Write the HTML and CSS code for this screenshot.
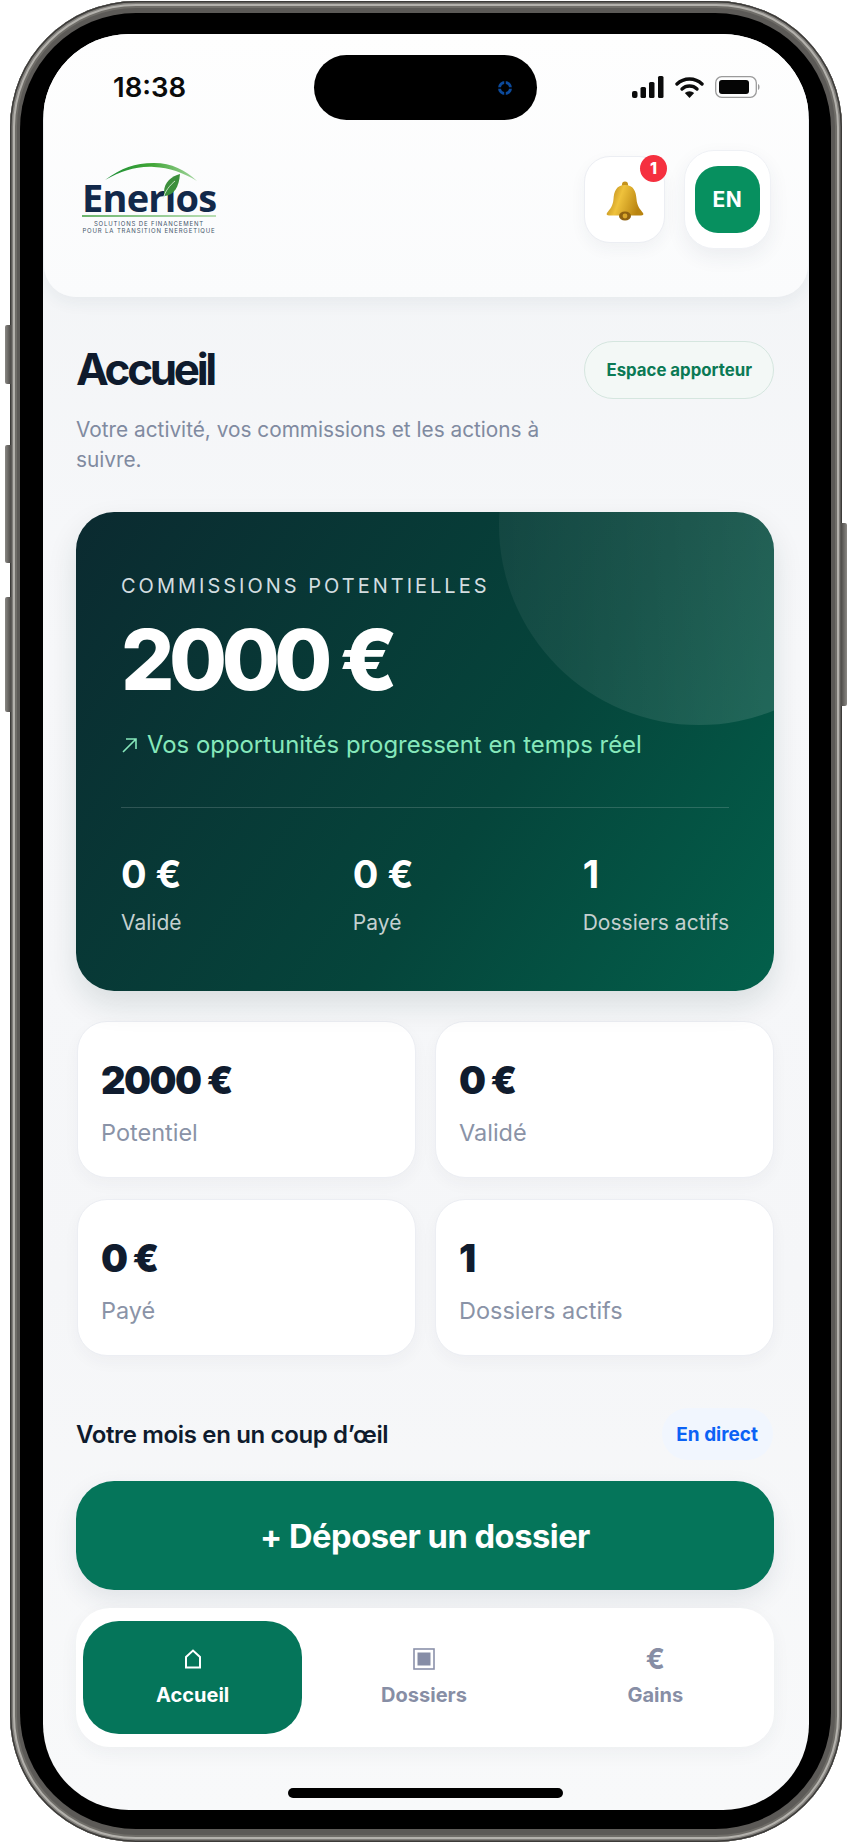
FILE: index.html
```html
<!DOCTYPE html>
<html>
<head>
    <title>Enerios - Accueil</title>
    <link rel="stylesheet" href="styles.css">
</head>
<body>
    <div class="phone">
        <span class="side-btn side-1"></span>
        <span class="side-btn side-2"></span>
        <span class="side-btn side-3"></span>
        <span class="side-btn side-4"></span>
        <div class="bezel">
            <div class="screen">
                <div class="island">
                    <svg class="camera" width="14" height="14" viewBox="0 0 14 14">
                        <circle cx="7" cy="7" r="5.5" fill="none" stroke="#0c4a9c" stroke-width="3"/>
                        <path d="M7 0 V14 M0 7 H14" stroke="#000" stroke-width="1.6"/>
                    </svg>
                </div>

                <header class="top-card">
                    <div class="status-bar">
                        <span class="time">18:38</span>
                        <div class="status-icons">
                            <svg width="32" height="22" viewBox="0 0 32 22">
                                <rect x="0" y="15" width="5.5" height="7" rx="2" fill="#0b0b0b"/>
                                <rect x="8.5" y="11" width="5.5" height="11" rx="1.5" fill="#0b0b0b"/>
                                <rect x="17" y="6" width="5.5" height="16" rx="1.5" fill="#0b0b0b"/>
                                <rect x="26" y="0" width="5.5" height="22" rx="1.5" fill="#0b0b0b"/>
                            </svg>
                            <svg width="29" height="22" viewBox="0 0 29 22">
                                <path d="M2 8 A18 18 0 0 1 27 8" fill="none" stroke="#0b0b0b" stroke-width="3.4" stroke-linecap="round"/>
                                <path d="M7 13 A11 11 0 0 1 22 13" fill="none" stroke="#0b0b0b" stroke-width="3.4" stroke-linecap="round"/>
                                <path d="M14.5 22 L9.8 17 A7 7 0 0 1 19.2 17 Z" fill="#0b0b0b"/>
                            </svg>
                            <svg width="46" height="22" viewBox="0 0 46 22">
                                <rect x="0.7" y="0.7" width="40.6" height="20.6" rx="6" fill="none" stroke="#9a9a9a" stroke-width="1.3"/>
                                <rect x="4" y="4" width="30" height="14" rx="3" fill="#050505"/>
                                <path d="M43 8 C45 8.6 45 13.4 43 14 Z" fill="#9a9a9a"/>
                            </svg>
                        </div>
                    </div>
                    <div class="brand-row">
                        <div class="logo">
                            <svg class="logo-mark" width="134" height="40" viewBox="0 0 134 40">
                                <defs>
                                    <linearGradient id="arcGrad" x1="0" x2="1" y1="0" y2="0">
                                        <stop offset="0" stop-color="#1f8f3a"/>
                                        <stop offset="0.5" stop-color="#3fa535"/>
                                        <stop offset="1" stop-color="#a5d6a0"/>
                                    </linearGradient>
                                </defs>
                                <path d="M23 19 C40 7 52 2 72 2 C90 2 103 9 115 20 C100 11 88 7 72 6 C54 5 40 10 23 19 Z" fill="url(#arcGrad)"/>
                                <path d="M98 13 C90 15 82 21 82 31 C82 33 82 34 83 35 C92 34 97 26 98 13 Z" fill="#3c8f3c"/>
                                <path d="M81 38 C83 30 88 24 93 20" fill="none" stroke="#eaf5e6" stroke-width="0.8"/>
                            </svg>
                            <div class="logo-name">Enerios</div>
                            <div class="logo-line"></div>
                            <div class="logo-tag">SOLUTIONS DE FINANCEMENT</div>
                            <div class="logo-tag">POUR LA TRANSITION ENERGETIQUE</div>
                        </div>
                        <div class="top-actions">
                            <div class="bell-btn">
                                <svg width="38" height="40" viewBox="0 0 38 40">
                                    <defs>
                                        <linearGradient id="bellGrad" x1="0" x2="1" y1="0" y2="0.3">
                                            <stop offset="0" stop-color="#a87410"/>
                                            <stop offset="0.45" stop-color="#efc23c"/>
                                            <stop offset="1" stop-color="#b98410"/>
                                        </linearGradient>
                                    </defs>
                                    <circle cx="19" cy="3.5" r="3" fill="#c4921c"/>
                                    <path d="M19 4 C10 4 8 11 7.5 18 C7 25 4 28 1 32 C0 33.5 1 34.5 3 34.5 L35 34.5 C37 34.5 38 33.5 37 32 C34 28 31 25 30.5 18 C30 11 28 4 19 4 Z" fill="url(#bellGrad)"/>
                                    <ellipse cx="19" cy="35" rx="6" ry="4.5" fill="#8f6210"/>
                                    <circle cx="19" cy="35" r="2.4" fill="#d9a72a"/>
                                </svg>
                                <span class="bell-badge">1</span>
                            </div>
                            <div class="lang-btn"><div class="lang-inner">EN</div></div>
                        </div>
                    </div>
                </header>

                <main class="content">
                    <div class="title-row">
                        <div>
                            <h1>Accueil</h1>
                            <p class="subtitle">Votre activité, vos commissions et les actions à suivre.</p>
                        </div>
                        <div class="role-pill">Espace apporteur</div>
                    </div>

                    <section class="hero">
                        <span class="hero-circle"></span>
                        <div class="hero-label">COMMISSIONS POTENTIELLES</div>
                        <div class="hero-amount">2000 €</div>
                        <div class="hero-trend">
                            <svg width="17" height="17" viewBox="0 0 17 17">
                                <path d="M2 15 L15 2 M5 2 L15 2 L15 12" fill="none" stroke="#86e8bb" stroke-width="1.6"/>
                            </svg>
                            Vos opportunités progressent en temps réel
                        </div>
                        <div class="hero-stats">
                            <div><div class="hero-value">0 €</div><div class="hero-name">Validé</div></div>
                            <div><div class="hero-value">0 €</div><div class="hero-name">Payé</div></div>
                            <div><div class="hero-value">1</div><div class="hero-name">Dossiers actifs</div></div>
                        </div>
                    </section>

                    <section class="stat-grid">
                        <div class="stat-card"><div class="stat-value">2000 €</div><div class="stat-name">Potentiel</div></div>
                        <div class="stat-card"><div class="stat-value">0 €</div><div class="stat-name">Validé</div></div>
                        <div class="stat-card"><div class="stat-value">0 €</div><div class="stat-name">Payé</div></div>
                        <div class="stat-card"><div class="stat-value">1</div><div class="stat-name">Dossiers actifs</div></div>
                    </section>

                    <div class="month-row">
                        <span class="month-title">Votre mois en un coup d’œil</span>
                        <span class="live-pill">En direct</span>
                    </div>

                    <button class="cta">+ Déposer un dossier</button>

                    <nav class="tabs">
                        <div class="tab active">
                            <svg width="18" height="20" viewBox="0 0 18 20">
                                <path d="M2 8 L9 1.5 L16 8 L16 18.5 L2 18.5 Z" fill="none" stroke="#fff" stroke-width="2"/>
                            </svg>
                            <span>Accueil</span>
                        </div>
                        <div class="tab">
                            <svg width="22" height="22" viewBox="0 0 22 22">
                                <rect x="1" y="1" width="20" height="20" fill="none" stroke="#8b91aa" stroke-width="1.6"/>
                                <rect x="4.5" y="4.5" width="13" height="13" fill="#868da6"/>
                            </svg>
                            <span>Dossiers</span>
                        </div>
                        <div class="tab">
                            <div class="tab-euro">€</div>
                            <span>Gains</span>
                        </div>
                    </nav>
                </main>

                <div class="home-bar"></div>
            </div>
        </div>
    </div>
</body>
</html>
```

FILE: styles.css
```css
* {
    box-sizing: border-box;
}
body {
    margin: 0;
    background-color: #fff;
    font-family: Inter, "Liberation Sans", sans-serif;
    color: #0f1b2d;
}
.phone {
    position: relative;
    width: 832px;
    height: 1841px;
    margin: 1px 0 0 10px;
    padding: 12px 11px 13px 10px;
    border-radius: 126px;
    background-color: #5c5a57;
    box-shadow: inset 0 0 0 1.5px #3c3b39, inset 0 0 0 3px #7f7d79, inset 0 0 0 5px #b3b1ac, inset 0 0 0 7px #6f6d68;
}
.side-btn {
    position: absolute;
    width: 6px;
    background: linear-gradient(90deg, #8a8884, #4d4b48);
    border-radius: 2px 0 0 2px;
}
.side-1 { left: -5px; top: 324px; height: 59px; }
.side-2 { left: -5px; top: 444px; height: 118px; }
.side-3 { left: -5px; top: 596px; height: 115px; }
.side-4 { left: auto; right: -5px; top: 522px; height: 183px; border-radius: 0 2px 2px 0; background: linear-gradient(90deg, #4d4b48, #8a8884); }
.bezel {
    height: 100%;
    padding: 21px 22px 19px 23px;
    border-radius: 116px;
    background-color: #000;
}
.screen {
    position: relative;
    display: flex;
    flex-direction: column;
    height: 100%;
    border-radius: 86px;
    overflow: hidden;
    background: linear-gradient(180deg, #f1f3f5 0, #f7f8fa 35%, #f5f6f8 70%, #f8f9fa 100%);
}
.island {
    position: absolute;
    left: 271px;
    top: 21px;
    width: 223px;
    height: 65px;
    border-radius: 33px;
    background-color: #000;
    z-index: 2;
}
.camera {
    position: absolute;
    left: 184px;
    top: 26px;
}
.top-card {
    height: 263px;
    margin: 0 1px;
    border-radius: 0 0 32px 32px;
    background: linear-gradient(180deg, #fefefe, #fafbfc);
    box-shadow: 0 6px 16px rgba(40, 60, 80, 0.06);
}
.status-bar {
    display: flex;
    justify-content: space-between;
    align-items: center;
    padding: 38px 47px 0 69px;
}
.time {
    font-size: 27.5px;
    font-weight: 600;
    line-height: 30px;
    color: #0b0b0b;
}
.status-icons {
    display: flex;
    align-items: center;
    gap: 11px;
}
.brand-row {
    display: flex;
    justify-content: space-between;
    align-items: flex-start;
    padding: 48px 37px 0 38px;
}
.logo {
    position: relative;
    width: 134px;
    padding-top: 31px;
}
.logo-mark {
    position: absolute;
    left: 0;
    top: 11px;
}
.logo-name {
    font-family: "Open Sans", sans-serif;
    font-size: 38px;
    font-weight: 700;
    line-height: 32px;
    letter-spacing: -0.8px;
    color: #12294a;
}
.logo-line {
    height: 2px;
    margin-top: 2px;
    background: linear-gradient(90deg, #6db56d, #b9deb3);
}
.logo-tag {
    margin-top: 3px;
    font-size: 6px;
    line-height: 7px;
    letter-spacing: 0.85px;
    text-align: center;
    white-space: nowrap;
    color: #44546a;
}
.logo-tag + .logo-tag {
    margin-top: 0;
}
.top-actions {
    display: flex;
    align-items: center;
    gap: 19px;
}
.bell-btn {
    position: relative;
    display: flex;
    justify-content: center;
    align-items: center;
    width: 81px;
    height: 87px;
    padding-top: 2px;
    border: 1px solid #eceef3;
    border-radius: 26px;
    background-color: #fff;
    box-shadow: 0 6px 16px rgba(40, 60, 80, 0.05);
}
.bell-badge {
    position: absolute;
    right: -3px;
    top: -2px;
    width: 27px;
    height: 27px;
    border-radius: 50%;
    background-color: #f5303f;
    color: #fff;
    font-size: 16px;
    font-weight: 800;
    line-height: 27px;
    text-align: center;
}
.lang-btn {
    display: flex;
    justify-content: center;
    align-items: center;
    width: 87px;
    height: 99px;
    border: 1px solid #eff1f5;
    border-radius: 30px;
    background-color: #fff;
    box-shadow: 0 8px 20px rgba(40, 60, 80, 0.07);
}
.lang-inner {
    width: 65px;
    height: 67px;
    border-radius: 23px;
    background-color: #07905f;
    color: #fff;
    font-size: 21px;
    font-weight: 700;
    line-height: 67px;
    letter-spacing: 0.5px;
    text-align: center;
}
.content {
    padding: 44px 35px 0 33px;
}
.title-row {
    display: flex;
    justify-content: space-between;
    align-items: flex-start;
}
h1 {
    margin: 2px 0 0;
    font-size: 44px;
    font-weight: 700;
    line-height: 52px;
    letter-spacing: -3.3px;
    color: #0f1b2d;
}
.subtitle {
    width: 480px;
    margin: 20px 0 0;
    font-size: 20.8px;
    line-height: 30px;
    color: #808aa0;
}
.role-pill {
    display: flex;
    align-items: center;
    height: 58px;
    padding: 0 21px;
    border: 1.5px solid #d5e6df;
    border-radius: 29px;
    background-color: #f3f8f6;
    color: #0b7a55;
    font-size: 16.8px;
    font-weight: 700;
}
.hero {
    position: relative;
    height: 479px;
    margin-top: 37px;
    padding: 61px 45px 0;
    border-radius: 38px;
    overflow: hidden;
    background: linear-gradient(125deg, #0b2a30 0%, #05453b 60%, #03604b 100%);
    box-shadow: 0 14px 30px rgba(20, 50, 50, 0.12);
    color: #fff;
}
.hero-circle {
    position: absolute;
    left: 423px;
    top: 13px;
    width: 400px;
    height: 400px;
    margin-top: -200px;
    border-radius: 50%;
    background: linear-gradient(90deg, rgba(255, 255, 255, 0.05), rgba(255, 255, 255, 0.15));
}
.hero-label {
    font-size: 20px;
    line-height: 26px;
    letter-spacing: 3px;
    color: #d3dde0;
}
.hero-amount {
    margin-top: 13px;
    font-size: 84px;
    font-weight: 800;
    line-height: 96px;
    letter-spacing: -5.5px;
}
.hero-trend {
    display: flex;
    align-items: center;
    gap: 9px;
    margin-top: 21px;
    font-size: 23.9px;
    line-height: 32px;
    color: #86e8bb;
}
.hero-stats {
    display: flex;
    justify-content: space-between;
    margin-top: 46px;
    padding-top: 42px;
    border-top: 1px solid rgba(255, 255, 255, 0.16);
}
.hero-value {
    font-size: 38px;
    font-weight: 700;
    line-height: 48px;
}
.hero-name {
    margin-top: 11px;
    font-size: 21px;
    line-height: 28px;
    color: #c4d0d0;
}
.hero-stats > div:nth-child(2) {
    margin-left: 2px;
}
.stat-grid {
    display: grid;
    grid-template-columns: 1fr 1fr;
    gap: 21px 19px;
    margin-top: 30px;
    padding: 0 0 0 1px;
}
.stat-card {
    height: 157px;
    padding: 35px 23px 0;
    border: 1px solid #eceef3;
    border-radius: 30px;
    background-color: #fff;
    box-shadow: 0 6px 16px rgba(40, 60, 80, 0.04);
}
.stat-value {
    font-size: 38px;
    font-weight: 900;
    line-height: 46px;
    letter-spacing: -1.5px;
    color: #101c2e;
}
.stat-name {
    margin-top: 15px;
    font-size: 23.5px;
    line-height: 30px;
    color: #8a93a7;
}
.month-row {
    display: flex;
    justify-content: space-between;
    align-items: center;
    margin-top: 52px;
}
.month-title {
    font-size: 24px;
    font-weight: 600;
    letter-spacing: -0.35px;
    color: #0f1b2d;
}
.live-pill {
    display: flex;
    align-items: center;
    height: 52px;
    margin-right: 1px;
    padding: 0 15px 0 14px;
    border-radius: 26px;
    background-color: #f1f6fe;
    color: #0b62f5;
    font-size: 19px;
    font-weight: 700;
}
.cta {
    display: block;
    width: 100%;
    height: 109px;
    margin-top: 21px;
    border: none;
    border-radius: 38px;
    background-color: #05755a;
    box-shadow: 0 10px 24px rgba(40, 60, 80, 0.1);
    color: #fff;
    font-family: inherit;
    font-size: 32.7px;
    font-weight: 700;
    letter-spacing: -0.5px;
}
.tabs {
    display: grid;
    grid-template-columns: repeat(3, 1fr);
    gap: 12px;
    height: 139px;
    margin-top: 18px;
    padding: 13px 9px 13px 7px;
    border-radius: 34px;
    background-color: #fff;
    box-shadow: 0 6px 18px rgba(40, 60, 80, 0.05);
}
.tab {
    display: flex;
    flex-direction: column;
    align-items: center;
    padding-top: 27px;
    border-radius: 36px;
    color: #878ea5;
    font-size: 20px;
    font-weight: 700;
}
.tab svg,
.tab-euro {
    height: 22px;
}
.tab span {
    margin-top: 12px;
    line-height: 26px;
}
.tab.active {
    background-color: #05755a;
    color: #fff;
}
.tab-euro {
    font-size: 28px;
    line-height: 22px;
}
.home-bar {
    position: absolute;
    left: 245px;
    bottom: 12px;
    width: 275px;
    height: 10px;
    border-radius: 5px;
    background-color: #000;
}
```
